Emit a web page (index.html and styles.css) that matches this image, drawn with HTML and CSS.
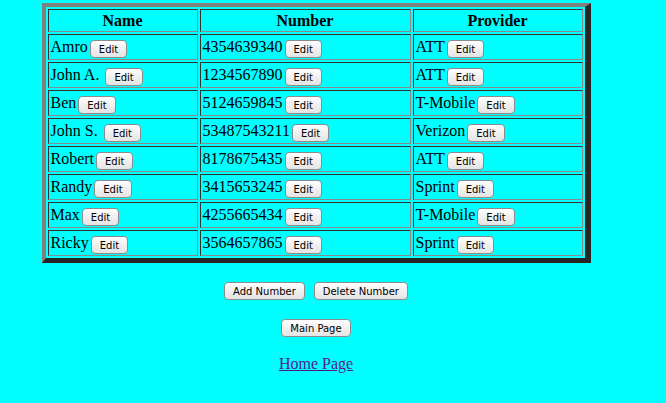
FILE: index.html
```html
<!DOCTYPE html>
<html>
<head>
<meta charset="utf-8">
<title>Phone Numbers</title>
<link rel="stylesheet" href="styles.css">
</head>
<body>
<div class="page">
  <table class="phones">
    <thead>
      <tr><th class="c1">Name</th><th class="c2">Number</th><th class="c3">Provider</th></tr>
    </thead>
    <tbody>
      <tr><td>Amro<button class="btn">Edit</button></td><td>4354639340<button class="btn">Edit</button></td><td>ATT<button class="btn">Edit</button></td></tr>
      <tr><td>John A. <button class="btn">Edit</button></td><td>1234567890<button class="btn">Edit</button></td><td>ATT<button class="btn">Edit</button></td></tr>
      <tr><td>Ben<button class="btn">Edit</button></td><td>5124659845<button class="btn">Edit</button></td><td>T-Mobile<button class="btn">Edit</button></td></tr>
      <tr><td>John S. <button class="btn">Edit</button></td><td>53487543211<button class="btn">Edit</button></td><td>Verizon<button class="btn">Edit</button></td></tr>
      <tr><td>Robert<button class="btn">Edit</button></td><td>8178675435<button class="btn">Edit</button></td><td>ATT<button class="btn">Edit</button></td></tr>
      <tr><td>Randy<button class="btn">Edit</button></td><td>3415653245<button class="btn">Edit</button></td><td>Sprint<button class="btn">Edit</button></td></tr>
      <tr><td>Max<button class="btn">Edit</button></td><td>4255665434<button class="btn">Edit</button></td><td>T-Mobile<button class="btn">Edit</button></td></tr>
      <tr><td>Ricky<button class="btn">Edit</button></td><td>3564657865<button class="btn">Edit</button></td><td>Sprint<button class="btn">Edit</button></td></tr>
    </tbody>
  </table>
  <div class="actions">
    <button class="btn">Add Number</button>
    <button class="btn">Delete Number</button>
  </div>
  <div class="actions main">
    <button class="btn">Main Page</button>
  </div>
  <a class="home" href="#">Home Page</a>
</div>
</body>
</html>
```

FILE: styles.css
```css
html, body {
  margin: 0;
  padding: 0;
  background: #00ffff;
}
body {
  font-family: "Liberation Serif", "Times New Roman", serif;
  font-size: 16px;
  color: #000;
}
.page {
  width: 632px;
  padding-top: 3px;
  display: flex;
  flex-direction: column;
  align-items: center;
}
.phones {
  table-layout: fixed;
  border-collapse: separate;
  border-spacing: 2px;
  border-style: solid;
  border-width: 4px 6px 5px 4px;
  border-color: #808080 #262626 #262626 #808080;
  background: #00ffff;
}
.phones th, .phones td {
  border: 1px solid;
  border-color: #333 #8a8a8a #8a8a8a #333;
  padding: 0 2px;
  text-align: left;
  white-space: nowrap;
}
.phones th {
  height: 21px;
  text-align: center;
  font-weight: bold;
  vertical-align: middle;
}
.phones td {
  height: 22px;
  padding-top: 2px;
  vertical-align: middle;
}
.c1 { width: 144px; }
.c2 { width: 205px; }
.c3 { width: 164px; }
.btn {
  font-family: "DejaVu Sans", "Liberation Sans", sans-serif;
  font-size: 10px;
  color: #000;
  height: 18px;
  padding: 0 8px;
  margin: 0 0 0 2px;
  border: 1px solid #8c8c8c;
  border-radius: 4px;
  background: linear-gradient(#ffffff, #f0f0f0 50%, #e4e4e4);
  vertical-align: 1px;
}
.phones .btn {
  vertical-align: -1px;
}
.actions {
  margin-top: 19px;
  display: flex;
  gap: 9px;
}
.actions .btn {
  margin: 0;
  height: 18px;
}
.actions.main {
  margin-top: 19px;
}
.home {
  margin-top: 18px;
  color: #551a8b;
  text-decoration: underline;
}
```
